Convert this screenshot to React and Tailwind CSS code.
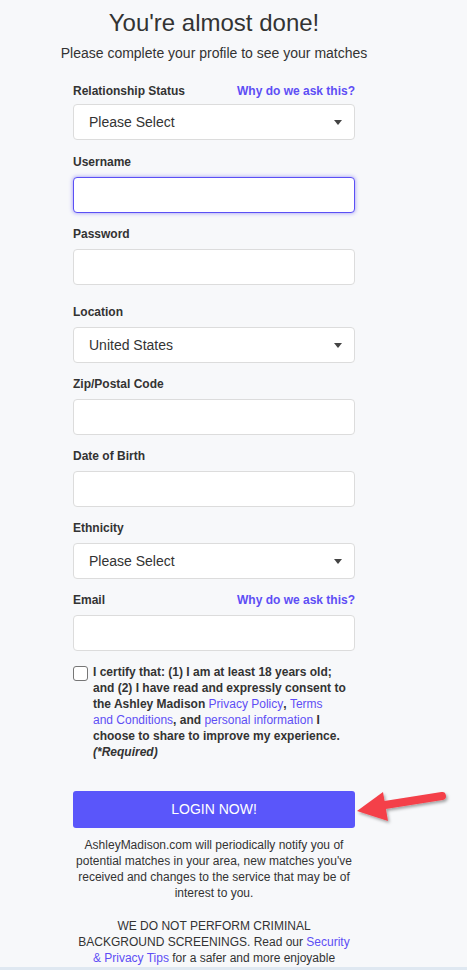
import React from 'react';

const font = { fontFamily: '"Liberation Sans", Arial, sans-serif' };

function Label({ children, why, className = 'mb-[6px]' }) {
  return (
    <div className={'flex items-center justify-between h-[17px] ' + className}>
      <span className="text-[12px] leading-[17px] font-bold text-[#333]">{children}</span>
      {why && (
        <span className="text-[12px] leading-[17px] font-bold text-[#5e4ef5]">Why do we ask this?</span>
      )}
    </div>
  );
}

function Select({ value }) {
  return (
    <div className="h-[36px] bg-white border border-[#dcdcdc] rounded-[4px] flex items-center justify-between pl-[15px] pr-[12px]">
      <span className="text-[14px] text-[#333]">{value}</span>
      <span className="w-0 h-0 border-l-[4.5px] border-r-[4.5px] border-t-[5px] border-l-transparent border-r-transparent border-t-[#444]" />
    </div>
  );
}

function Input({ focused }) {
  return (
    <div
      className={
        focused
          ? 'h-[36px] bg-white border border-[#5b50f5] rounded-[4px] shadow-[0_0_4px_rgba(91,80,245,0.6)]'
          : 'h-[36px] bg-white border border-[#dcdcdc] rounded-[4px]'
      }
    />
  );
}

function Field({ label, why, children, className = 'mt-[13px]', labelClass }) {
  return (
    <div className={className}>
      <Label why={why} className={labelClass}>
        {label}
      </Label>
      {children}
    </div>
  );
}

function Arrow() {
  return (
    <svg className="absolute left-[284px] top-[-5px]" width="100" height="44" viewBox="0 0 100 44">
      <defs>
        <filter id="sh" x="-20%" y="-40%" width="140%" height="180%">
          <feDropShadow dx="1.5" dy="2" stdDeviation="1.5" floodColor="#000" floodOpacity="0.35" />
        </filter>
      </defs>
      <g filter="url(#sh)" fill="#f44049">
        <path d="M28 19 L85 10" stroke="#f44049" strokeWidth="8" strokeLinecap="round" fill="none" />
        <path d="M0 25 L26 6 L31 35 Z" />
      </g>
    </svg>
  );
}

const link = 'font-normal text-[#5e4ef5]';

export default function App() {
  return (
    <div className="min-h-[970px] bg-[#f7f8fa] overflow-hidden" style={font}>
      <div className="w-[428px] text-[#333]">
        <h1 className="pt-[9px] text-center text-[24px] leading-[28px] text-[#333]">You're almost done!</h1>
        <p className="mt-[6px] text-center text-[14px] leading-[20px] text-[#333]">
          Please complete your profile to see your matches
        </p>

        <div className="w-[282px] mx-auto mt-[20px]">
          <Field label="Relationship Status" why className="" labelClass="mb-[4px]">
            <Select value="Please Select" />
          </Field>
          <Field label="Username" className="mt-[14px]">
            <Input focused />
          </Field>
          <Field label="Password">
            <Input />
          </Field>
          <Field label="Location" className="mt-[19px]">
            <Select value="United States" />
          </Field>
          <Field label="Zip/Postal Code">
            <Input />
          </Field>
          <Field label="Date of Birth">
            <Input />
          </Field>
          <Field label="Ethnicity">
            <Select value="Please Select" />
          </Field>
          <Field label="Email" why>
            <Input />
          </Field>

          <div className="mt-[13px] flex items-start">
            <span className="mt-[2px] w-[15px] h-[15px] shrink-0 bg-white border border-[#767676] rounded-[3px]" />
            <p className="ml-[5px] text-[12px] leading-[16px] font-bold text-[#333] whitespace-nowrap">
              I certify that: (1) I am at least 18 years old;
              <br />
              and (2) I have read and expressly consent to
              <br />
              the Ashley Madison <span className={link}>Privacy Policy</span>, <span className={link}>Terms</span>
              <br />
              <span className={link}>and Conditions</span>, and <span className={link}>personal information</span> I
              <br />
              choose to share to improve my experience.
              <br />
              <em>(*Required)</em>
            </p>
          </div>

          <div className="relative mt-[31px]">
            <button className="w-full h-[37px] bg-[#5a56fa] rounded-[3px] text-white text-[14px]">LOGIN NOW!</button>
            <Arrow />
          </div>

          <div className="mt-[9px] text-center text-[12px] leading-[16px] text-[#333]">
            <p>
              AshleyMadison.com will periodically notify you of potential matches in your area, new matches you've
              received and changes to the service that may be of interest to you.
            </p>
            <p className="mt-[17px] px-[4px]">
              WE DO NOT PERFORM CRIMINAL BACKGROUND SCREENINGS. Read our{' '}
              <span className="text-[#5e4ef5]">Security &amp; Privacy Tips</span> for a safer and more enjoyable
              experience.
            </p>
          </div>
        </div>
      </div>
      <div className="fixed left-0 right-0 bottom-0 h-[3px] bg-[#dfe8f1]" />
    </div>
  );
}
